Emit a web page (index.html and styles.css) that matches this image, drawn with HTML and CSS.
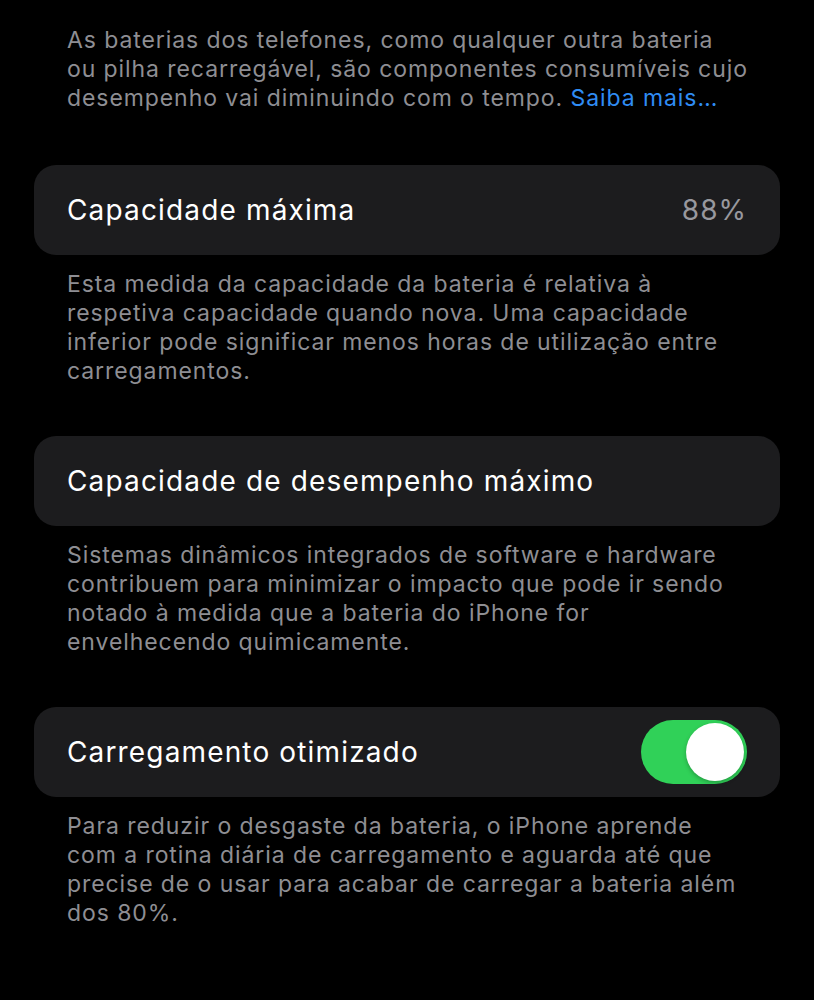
FILE: index.html
```html
<!DOCTYPE html>
<html lang="pt">
<head>
<meta charset="utf-8">
<link rel="stylesheet" href="styles.css">
</head>
<body>
<main class="page">
  <p class="note note-first">As baterias dos telefones, como qualquer outra bateria<br>ou pilha recarregável, são componentes consumíveis cujo<br>desempenho vai diminuindo com o tempo. <span class="link">Saiba mais…</span></p>

  <div class="card">
    <span class="label">Capacidade máxima</span>
    <span class="value">88%</span>
  </div>
  <p class="note">Esta medida da capacidade da bateria é relativa à<br>respetiva capacidade quando nova. Uma capacidade<br>inferior pode significar menos horas de utilização entre<br>carregamentos.</p>

  <div class="card">
    <span class="label">Capacidade de desempenho máximo</span>
  </div>
  <p class="note">Sistemas dinâmicos integrados de software e hardware<br>contribuem para minimizar o impacto que pode ir sendo<br>notado à medida que a bateria do iPhone for<br>envelhecendo quimicamente.</p>

  <div class="card">
    <span class="label">Carregamento otimizado</span>
    <span class="toggle"><span class="knob"></span></span>
  </div>
  <p class="note">Para reduzir o desgaste da bateria, o iPhone aprende<br>com a rotina diária de carregamento e aguarda até que<br>precise de o usar para acabar de carregar a bateria além<br>dos 80%.</p>
</main>
</body>
</html>
```

FILE: styles.css
```css
html, body {
  margin: 0;
  padding: 0;
  background: #000;
}
body {
  font-family: Inter, "Noto Sans", sans-serif;
  -webkit-font-smoothing: antialiased;
}
.page {
  display: flex;
  flex-direction: column;
  padding: 26px 34px 0 34px;
}
.note {
  margin: 15px 0 50px 0;
  padding: 0 33px;
  color: #8e8e93;
  font-size: 23px;
  line-height: 29px;
  letter-spacing: 0.92px;
  white-space: nowrap;
}
.note-first {
  margin-top: 0;
  margin-bottom: 52px;
}
.link {
  color: #2f8cf4;
}
.card {
  height: 90px;
  box-sizing: border-box;
  background: #1c1c1e;
  border-radius: 22px;
  padding: 0 33px;
  display: flex;
  align-items: center;
  justify-content: space-between;
}
.label {
  color: #fff;
  font-size: 28px;
  letter-spacing: 1.15px;
}
.value {
  color: #98989e;
  font-size: 28px;
  letter-spacing: 1px;
}
.toggle {
  width: 106px;
  height: 64px;
  border-radius: 32px;
  background: #30d158;
  display: flex;
  align-items: center;
  justify-content: flex-end;
  padding: 0 3px;
  box-sizing: border-box;
}
.knob {
  width: 58px;
  height: 58px;
  border-radius: 50%;
  background: #fff;
  box-shadow: 0 2px 4px rgba(0,0,0,0.25);
}
```
